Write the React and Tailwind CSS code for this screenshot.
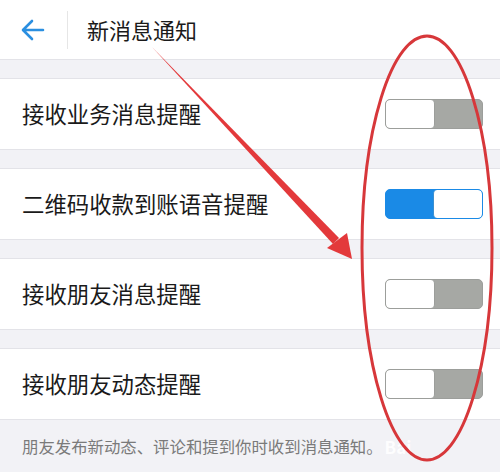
import React, { useState } from 'react';

const font = { fontFamily: '"Noto Sans CJK SC", "Noto Sans", sans-serif' };

function Toggle({ on, onChange }) {
  return (
    <button
      onClick={onChange}
      className={`flex h-[30px] w-[98px] overflow-hidden rounded-[5px] border ${
        on ? 'border-[#1a8ae6] bg-[#1a8ae6] justify-end' : 'border-[#9c9e9b] bg-[#a6a8a4] justify-start'
      }`}
    >
      <span
        className={`h-full w-[49px] rounded-[4px] bg-white ${on ? 'border-l border-[#3b8fd0]' : 'border-r border-[#9c9e9b]'}`}
      />
    </button>
  );
}

function Row({ label, on, onChange }) {
  return (
    <div className="flex h-[70px] items-center justify-between bg-white pl-[22px] pr-[17px]">
      <span className="text-[22.4px] text-[#1a1a1a]">{label}</span>
      <Toggle on={on} onChange={onChange} />
    </div>
  );
}

function Gap() {
  return <div className="h-[20px] border-y border-[#e3e3e8] bg-[#f2f2f6]" />;
}

export default function App() {
  const [items, setItems] = useState([
    { label: '接收业务消息提醒', on: false },
    { label: '二维码收款到账语音提醒', on: true },
    { label: '接收朋友消息提醒', on: false },
    { label: '接收朋友动态提醒', on: false },
  ]);

  const toggle = (i) =>
    setItems((prev) => prev.map((it, j) => (j === i ? { ...it, on: !it.on } : it)));

  return (
    <div className="relative h-[472px] w-[500px] overflow-hidden bg-[#f2f2f6]" style={font}>
      <div className="flex h-[59px] items-center bg-white">
        <div className="flex w-[67px] items-center pl-[21px]">
          <svg width="24" height="22" viewBox="0 0 24 22" fill="none" stroke="#2b8fe0" strokeWidth="2.6" strokeLinecap="round" strokeLinejoin="round">
            <path d="M22 11H3M11 2L2 11l9 9" />
          </svg>
        </div>
        <div className="h-[38px] w-px bg-[#e6e6e6]" />
        <span className="ml-[19px] text-[22px] text-[#1a1a1a]">新消息通知</span>
      </div>
      <Gap />
      {items.map((it, i) => (
        <React.Fragment key={it.label}>
          <Row label={it.label} on={it.on} onChange={() => toggle(i)} />
          {i < items.length - 1 && <Gap />}
        </React.Fragment>
      ))}
      <div className="flex h-[54px] items-center border-t border-[#e3e3e8] pl-[22px]">
        <span className="text-[16.4px] text-[#7a7a7a]">朋友发布新动态、评论和提到你时收到消息通知。</span>
        <span className="ml-[2px] text-[17px] font-bold text-white opacity-90">Bai</span>
      </div>

      {/* annotation overlay */}
      <svg className="pointer-events-none absolute left-0 top-0" width="500" height="472" viewBox="0 0 500 472">
        <path d="M152 47 L339 238 L333 244 Z" fill="#e3393b" />
        <path d="M352 259 L327 248 L347 233 Z" fill="#e3393b" />
        <ellipse cx="427" cy="248" rx="65" ry="212" fill="none" stroke="#d7373a" strokeWidth="3" />
      </svg>
    </div>
  );
}
